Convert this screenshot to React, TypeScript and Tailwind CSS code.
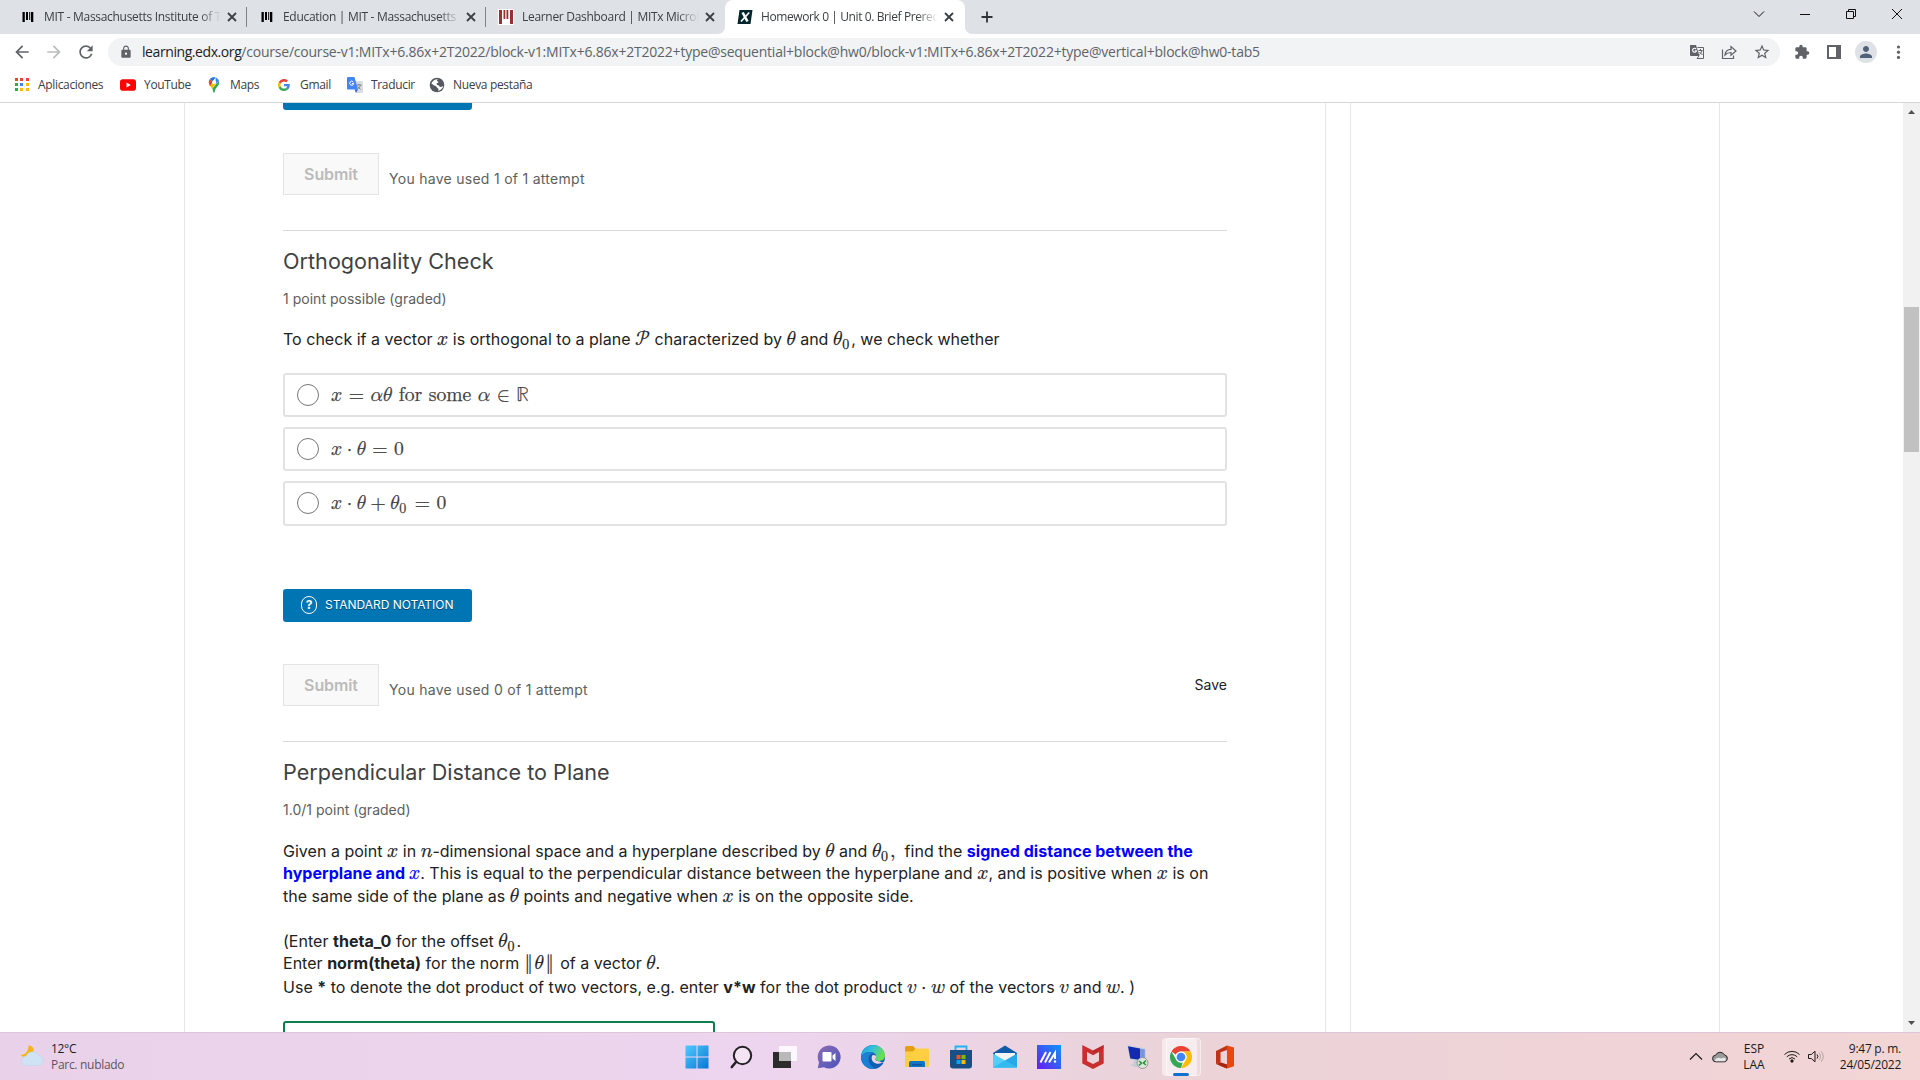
import type { ReactNode } from 'react';
import { MdArrowBack, MdArrowForward, MdExtension, MdLock, MdPerson, MdRefresh, MdStarBorder } from 'react-icons/md';

/* ---------- favicons ---------- */

function MitIcon() {
  return (
    <svg className="h-4 w-4" viewBox="0 0 16 16">
      <path fill="#000" d="M2.500 3h2.300v10H2.500zM6 3h2v8H6zM9.200 3h1v8h-1zM11 3h2.300v10H11z" />
    </svg>
  );
}

function MitxIcon() {
  return (
    <svg className="h-4 w-4" viewBox="0 0 16 16">
      <path fill="#fff" d="M0 0h16v16H0z" />
      <path fill="#973234" d="M1 1h3v14H1zM5.500 1h1.800v9H5.500zM8.500 1h1.800v9H8.500zM12 1h3v14h-3z" />
    </svg>
  );
}

function EdxIcon() {
  return (
    <svg className="h-4 w-4" viewBox="0 0 16 16">
      <path fill="#02262b" d="M2.500 1H15.500L13.500 15H0.500z" />
      <path fill="none" stroke="#fff" strokeWidth="2.600" d="M5.600 3.500l4.900 9" />
      <path fill="none" stroke="#fff" strokeWidth="1.700" d="M12.200 3.500L4 12.500" />
    </svg>
  );
}

function CloseIcon() {
  return (
    <svg className="h-4 w-4 shrink-0" viewBox="0 0 16 16">
      <path fill="none" stroke="#3c4043" strokeWidth="1.800" d="M4 4l8 8M12 4l-8 8" />
    </svg>
  );
}

interface TabData {
  title: string;
  icon: ReactNode;
  active?: boolean;
}

const tabs: TabData[] = [
  { title: 'MIT - Massachusetts Institute of Technology', icon: <MitIcon /> },
  { title: 'Education | MIT - Massachusetts Institute', icon: <MitIcon /> },
  { title: 'Learner Dashboard | MITx MicroMasters', icon: <MitxIcon /> },
  { title: 'Homework 0 | Unit 0. Brief Prerequisites', icon: <EdxIcon />, active: true },
];

function Tab({ title, icon, active }: TabData) {
  return (
    <div
      className={
        active
          ? 'flex h-[34px] w-[240px] items-center rounded-t-lg bg-white pl-3'
          : 'flex h-[34px] w-[239px] items-center pl-3'
      }
    >
      {icon}
      <div
        className={`ml-2 w-[177px] overflow-hidden whitespace-nowrap text-xs text-[#3c4043] [mask-image:linear-gradient(to_right,black_88%,transparent)] ${
          active ? 'tracking-[-0.4px]' : 'tracking-[-0.3px]'
        }`}
      >
        {title}
      </div>
      <div className="ml-[3px] flex">
        <CloseIcon />
      </div>
      {active && (
        <>
          <svg className="absolute -left-[7px] bottom-0 h-[7px] w-[7px]" viewBox="0 0 7 7">
            <path fill="#fff" d="M7 0v7H0a7 7 0 0 0 7-7z" />
          </svg>
          <svg className="absolute -right-[7px] bottom-0 h-[7px] w-[7px]" viewBox="0 0 7 7">
            <path fill="#fff" d="M0 0v7h7a7 7 0 0 1-7-7z" />
          </svg>
        </>
      )}
    </div>
  );
}

function TabStrip() {
  return (
    <div className="flex h-[34px] items-start justify-between bg-[#dee1e6] pl-2">
      <div className="flex">
        {tabs.map((tab, i) => (
          <div key={tab.title} className="relative">
            <Tab {...tab} />
            {i < 2 && <div className="absolute right-0 top-[7px] h-5 w-px bg-[#808387]" />}
          </div>
        ))}
        <svg className="ml-[14px] mt-[9px] h-4 w-4" viewBox="0 0 16 16">
          <path stroke="#303336" strokeWidth="1.800" d="M8 2.500v11M2.500 8h11" />
        </svg>
      </div>
      <div className="flex h-7 items-center gap-[30px] pr-[15px]">
        <svg className="h-4 w-4" viewBox="0 0 16 16" fill="none" stroke="#111">
          <path d="M3 5.500l5 5 5-5" />
        </svg>
        <svg className="h-4 w-4" viewBox="0 0 16 16" fill="none" stroke="#111">
          <path d="M3 8.500h10" />
        </svg>
        <svg className="h-4 w-4" viewBox="0 0 16 16" fill="none" stroke="#111">
          <path d="M3.500 5.500h7v7h-7zM5.500 5.500v-2h7v7h-2" />
        </svg>
        <svg className="h-4 w-4" viewBox="0 0 16 16" fill="none" stroke="#111">
          <path d="M3 3l10 10M13 3L3 13" />
        </svg>
      </div>
    </div>
  );
}

function Toolbar() {
  return (
    <div className="flex h-[32px] items-center pt-1 text-[#5f6368]">
      <MdArrowBack className="ml-3 h-5 w-5" />
      <MdArrowForward className="ml-3 h-5 w-5 text-[#babcbe]" />
      <MdRefresh className="ml-3 h-5 w-5" />
      <div className="ml-[12px] flex h-7 w-[1672px] items-center rounded-full bg-[#f1f3f4]">
        <MdLock className="ml-[11px] h-3.5 w-3.5" />
        <div className="ml-[9px] flex-1 whitespace-nowrap text-sm">
          <span className="tracking-[-0.42px] text-[#202124]">learning.edx.org</span>
          <span className="tracking-[-0.22px]">
            /course/course-v1:MITx+6.86x+2T2022/block-v1:MITx+6.86x+2T2022+type@sequential+block@hw0/block-v1:MITx+6.86x+2T2022+type@vertical+block@hw0-tab5
          </span>
        </div>
        <div className="flex items-center gap-4 pr-[9px]">
          <svg className="h-4 w-4" viewBox="0 0 16 16">
            <path fill="#5f6368" d="M1 1h6l3.500 11H2a1 1 0 0 1-1-1z" />
            <path fill="none" stroke="#5f6368" d="M8.500 3.500h6v11H8l2-2.500M9.500 6.500h4M11.500 5v1.500M13 6.500c-.5 2-1.500 3-2.500 4M10.500 8l3 3" />
            <path fill="none" stroke="#fff" strokeWidth="1.100" d="M7.100 5A2 2 0 1 0 7.500 6.800H5.700" />
          </svg>
          <svg className="h-4 w-4" viewBox="0 0 16 16" fill="none" stroke="#5f6368" strokeWidth="1.200">
            <path d="M1.500 5.500v9h11v-3" />
            <path d="M4 11c.3-4 2.700-5.500 6-5.600V2.500L15 7l-5 4.300V8.500C7.500 8.500 5.500 9.200 4 11z" />
          </svg>
          <MdStarBorder className="h-[18px] w-[18px]" />
        </div>
      </div>
      <MdExtension className="ml-[14px] h-4 w-4" />
      <svg className="ml-4 h-4 w-4" viewBox="0 0 16 16">
        <path fill="#5f6368" d="M1 1h14v14H1zM3 3v10h7V3z" fillRule="evenodd" />
      </svg>
      <div className="ml-[13px] flex h-[22px] w-[22px] items-center justify-center rounded-full bg-[#dee1e6]">
        <MdPerson className="h-[18px] w-[18px] text-[#52617a]" />
      </div>
      <svg className="ml-[13px] h-4 w-4" viewBox="0 0 16 16" fill="#5f6368">
        <circle cx="8.500" cy="3" r="1.600" />
        <circle cx="8.500" cy="8.200" r="1.600" />
        <circle cx="8.500" cy="13.400" r="1.600" />
      </svg>
    </div>
  );
}

/* ---------- bookmarks ---------- */

function AppsIcon() {
  const colors = ['#ea4335', '#ea4335', '#ea4335', '#34a853', '#4285f4', '#fbbc04', '#34a853', '#fbbc04', '#fbbc04'];
  return (
    <div className="grid h-4 w-4 grid-cols-3 gap-[2px] p-px">
      {colors.map((c, i) => (
        <div key={i} className="h-[3px] w-[3px]" style={{ background: c }} />
      ))}
    </div>
  );
}

function GoogleIcon() {
  return (
    <svg className="mx-[2px] h-3 w-3" viewBox="0 0 48 48">
      <path fill="#EA4335" d="M24 9.500c3.540 0 6.710 1.220 9.210 3.600l6.850-6.850C35.900 2.380 30.470 0 24 0 14.620 0 6.510 5.380 2.560 13.220l7.980 6.190C12.430 13.720 17.740 9.500 24 9.500z" />
      <path fill="#4285F4" d="M46.980 24.550c0-1.570-.150-3.090-.380-4.550H24v9.020h12.940c-.580 2.960-2.260 5.480-4.780 7.180l7.730 6c4.510-4.180 7.090-10.360 7.090-17.650z" />
      <path fill="#FBBC05" d="M10.530 28.590c-.480-1.450-.760-2.990-.760-4.590s.270-3.140.760-4.590l-7.980-6.190C.920 16.460 0 20.120 0 24s.920 7.540 2.560 10.780l7.970-6.190z" />
      <path fill="#34A853" d="M24 48c6.480 0 11.930-2.130 15.890-5.810l-7.730-6c-2.150 1.450-4.920 2.300-8.160 2.300-6.260 0-11.570-4.220-13.470-9.910l-7.980 6.190C6.510 42.620 14.620 48 24 48z" />
    </svg>
  );
}

const bookmarks = [
  { label: 'Aplicaciones', icon: <AppsIcon />, width: 'w-[106px]' },
  {
    label: 'YouTube',
    width: 'w-[86px]',
    icon: (
      <svg className="h-4 w-4" viewBox="0 0 16 16">
        <rect y="2.300" width="16" height="11.400" rx="2.800" fill="#f00" />
        <path fill="#fff" d="M6.500 5.500v5L10.800 8z" />
      </svg>
    ),
  },
  {
    label: 'Maps',
    width: 'w-[70px]',
    icon: (
      <svg className="h-4 w-4" viewBox="0 0 16 16">
        <path fill="#34a853" d="M13 3.800c1 3.800-1.500 5.400-3 7.500-1 1.500-1 4.500-2 4.500s-1-2.800-1.700-4.200z" />
        <path fill="#fbbc04" d="M3.500 8.300l3-3.300 3.700 1.500-4.300 5C5.200 10.300 4.200 9.500 3.500 8.300z" />
        <path fill="#ea4335" d="M3.900 2.100L7 4.500 4 8.900C2.300 6.500 2.400 4 3.900 2.100z" />
        <path fill="#1a73e8" d="M3.900 2.100C5.400.3 7.700 0 9.500.500L6.700 4.300z" />
        <path fill="#4285f4" d="M9.500.500c1.600.500 3 1.700 3.500 3.300L9.800 7z" />
        <circle cx="8" cy="5.300" r="1.900" fill="#fff" />
      </svg>
    ),
  },
  { label: 'Gmail', icon: <GoogleIcon />, width: 'w-[71px]' },
  {
    label: 'Traducir',
    width: 'w-[82px]',
    icon: (
      <svg className="h-4 w-4" viewBox="0 0 16 16">
        <path fill="#dadce0" d="M6 4h9a1 1 0 0 1 1 1v10a1 1 0 0 1-1 1H9.500z" />
        <path fill="none" stroke="#7a8288" d="M9.500 8h5M12 6.800V8M13.500 8c-.5 2-1.700 3-3 4M10.800 9.500l2.700 3" />
        <path fill="#4285f4" d="M1 0h6.500L11 12.500H1a1 1 0 0 1-1-1V1a1 1 0 0 1 1-1z" />
        <path fill="#3367d6" d="M7.500 12.500H11L9 16z" />
        <path fill="none" stroke="#fff" d="M6.300 5A2 2 0 1 0 6.700 6.500H4.900" />
      </svg>
    ),
  },
  {
    label: 'Nueva pestaña',
    width: 'w-[110px]',
    icon: (
      <svg className="h-4 w-4" viewBox="0 0 16 16">
        <circle cx="8" cy="8" r="7.300" fill="#565a5f" />
        <path fill="#fff" d="M9 2.200c-1.500.8-1.200 2 .2 2.200.6 1-.4 1.600-1.500 1.900l.2 1.700c1.500 0 2.500.5 2.700 1.800l1.600.2c.7-.6 1.500-.8 2-.5-.8 2.200-2.700 4-5 4.400.8-1.600.2-2.700-1.200-3.200-.3-1.500-1.500-2-2.800-2.300L2.400 6.600C3.200 4.200 5.800 2.100 9 2.200z" />
      </svg>
    ),
  },
];

function BookmarksBar() {
  return (
    <div className="flex h-[37px] items-center border-b border-[#d5d7da] pl-3.5 pt-px text-xs tracking-[-0.33px] text-[#3c4043]">
      {bookmarks.map((b) => (
        <div key={b.label} className={`flex items-center gap-2 whitespace-nowrap ${b.width}`}>
          {b.icon}
          <span>{b.label}</span>
        </div>
      ))}
    </div>
  );
}

/* ---------- course content ---------- */

function M({ children }: { children: ReactNode }) {
  return (
    <span className="font-['Latin_Modern_Math','STIX_Two_Math','Liberation_Serif',serif] text-[19.6px] font-normal leading-[0] tracking-normal [-webkit-text-stroke:0.25px_currentColor]">
      {children}
    </span>
  );
}

function Sub() {
  return <span className="relative top-[4px] mr-[2px] text-[14px]">0</span>;
}

// binary operators sit closer to their operands than relations do
function Bin({ children }: { children: ReactNode }) {
  return <span className="mx-[4.5px]">{children}</span>;
}

function Line({ children }: { children: ReactNode }) {
  return <div className="h-[22.5px] whitespace-pre leading-[22.5px]">{children}</div>;
}

function SubmitRow({ used, save }: { used: number; save?: boolean }) {
  return (
    <div className="flex h-[42px]">
      <button
        type="button"
        className="h-[42px] w-24 border border-[#e4e4e4] bg-[#f9f9f9] text-base font-semibold tracking-[-0.1px] text-[#bbb]"
      >
        Submit
      </button>
      <div className="ml-[10px] mt-[16px] h-5 flex-1 text-sm leading-5 tracking-[0.28px] text-[#5e5e5e]">
        You have used {used} of 1 attempt
      </div>
      {save && <div className="mt-[11px] h-5 text-sm leading-5 text-[#222]">Save</div>}
    </div>
  );
}

function Heading({ title, points }: { title: string; points: string }) {
  return (
    <div className="border-t border-[#d9d9d9] pt-[14px]">
      <h3 className="h-8 text-[21.6px] leading-8 text-[#414141]">{title}</h3>
      <div className="mt-3 h-5 text-sm leading-5 text-[#5e5e5e]">{points}</div>
    </div>
  );
}

function Choice({ children }: { children: ReactNode }) {
  return (
    <div className="flex h-[44px] items-center rounded-[3px] border-2 border-[#e2e2e2] pl-3 text-[#414141] last:h-[45px]">
      <div className="h-[22px] w-[22px] rounded-full border border-[#767676]" />
      <div className="ml-3 whitespace-pre">
        <M>{children}</M>
      </div>
    </div>
  );
}

function Course() {
  return (
    <div className="w-[944px] font-['Inter',sans-serif] text-base tracking-[0.02px] text-[#222]">
      <div className="h-[7px] w-[189px] rounded-b-[3px] bg-[#0075b4]" />
      <div className="mt-[43px]">
        <SubmitRow used={1} />
      </div>

      <div className="mt-[35px]">
        <Heading title="Orthogonality Check" points="1 point possible (graded)" />
      </div>
      <div className="mt-[19px]">
        <Line>
          To check if a vector <M>𝑥</M> is orthogonal to a plane <M>𝒫</M> characterized by <M>𝜃</M> and <M>𝜃<Sub /></M>, we check whether
        </Line>
      </div>
      <div className="mt-[22px] flex flex-col gap-2.5">
        <Choice>𝑥 = 𝛼𝜃 for some 𝛼 ∈ ℝ</Choice>
        <Choice>𝑥<Bin>⋅</Bin>𝜃 = 0</Choice>
        <Choice>𝑥<Bin>⋅</Bin>𝜃<Bin>+</Bin>𝜃<Sub /> = 0</Choice>
      </div>
      <div className="mt-[63px] flex h-[33px] w-[189px] items-center rounded-[3px] bg-[#0075b4] pl-[18px] text-white">
        <div className="flex h-[18px] w-4 items-center justify-center rounded-full border border-white text-xs font-bold">?</div>
        <span className="ml-2 whitespace-nowrap text-xs tracking-[-0.04px] [text-shadow:0_1px_0_#00466c]">STANDARD NOTATION</span>
      </div>
      <div className="mt-[42px]">
        <SubmitRow used={0} save />
      </div>

      <div className="mt-[35px]">
        <Heading title="Perpendicular Distance to Plane" points="1.0/1 point (graded)" />
      </div>
      <div className="mt-5">
        <Line>
          Given a point <M>𝑥</M> in <M>𝑛</M>-dimensional space and a hyperplane described by <M>𝜃</M> and <M>𝜃<Sub />,</M>{'  '}find the <b className="text-[#00f]">signed distance between the</b>
        </Line>
        <Line>
          <b className="text-[#00f]">hyperplane and <M>𝑥</M></b>. This is equal to the perpendicular distance between the hyperplane and <M>𝑥</M>, and is positive when <M>𝑥</M> is on
        </Line>
        <Line>
          the same side of the plane as <M>𝜃</M> points and negative when <M>𝑥</M> is on the opposite side.
        </Line>
      </div>
      <div className="mt-[22.5px]">
        <Line>
          (Enter <b>theta_0</b> for the offset <M>𝜃<Sub /></M>.
        </Line>
        <Line>
          Enter <b>norm(theta)</b> for the norm{' '}
          <span className="ml-px mr-[2px]">
            <M>‖<span className="mx-[2px]">𝜃</span>‖</M>
          </span>{' '}
          of a vector <M>𝜃</M>.
        </Line>
        <div className="h-[1.5px]" />
        <Line>
          Use <b>*</b> to denote the dot product of two vectors, e.g. enter <b>v*w</b> for the dot product <M>𝑣<Bin>⋅</Bin>𝑤</M> of the vectors <M>𝑣</M> and <M>𝑤</M>. )
        </Line>
      </div>
      <div className="mt-[22px] h-12 w-[432px] rounded-[3px] border-2 border-[#0d7d4d]" />
    </div>
  );
}

function Scrollbar() {
  return (
    <div className="flex h-full w-[17px] flex-col bg-[#f1f1f1]">
      <svg className="h-[17px] w-[17px]" viewBox="0 0 17 17">
        <path fill="#505050" d="M5 11h7L8.500 7z" />
      </svg>
      <div className="mx-px mt-[187px] h-[145px] bg-[#c1c1c1]" />
      <div className="flex-1" />
      <svg className="h-[17px] w-[17px]" viewBox="0 0 17 17">
        <path fill="#505050" d="M5 6h7l-3.500 4z" />
      </svg>
    </div>
  );
}

/* ---------- taskbar ---------- */

function TaskIcon({ children }: { children: ReactNode }) {
  return (
    <div className="flex w-11 justify-center">
      <svg className="h-6 w-6" viewBox="0 0 24 24">
        {children}
      </svg>
    </div>
  );
}

function TaskbarApps() {
  return (
    <div className="flex h-full w-[572px] items-center">
      <TaskIcon>
        <linearGradient id="win" x1="0" y1="0" x2="1" y2="1">
          <stop offset="0" stopColor="#4fcaff" />
          <stop offset="1" stopColor="#0a76d4" />
        </linearGradient>
        <path fill="url(#win)" d="M.500.500h11v11H.500zM12.500.500h11v11h-11zM.500 12.500h11v11H.500zM12.500 12.500h11v11h-11z" />
      </TaskIcon>
      <TaskIcon>
        <circle cx="13.500" cy="10.500" r="8.700" fill="#f3e3f3" stroke="#222" strokeWidth="2" />
        <path stroke="#222" strokeWidth="2.600" strokeLinecap="round" d="M7 17l-4.200 5" />
      </TaskIcon>
      <TaskIcon>
        <path fill="#2c2c2c" d="M0 7h18v16H0z" />
        <path fill="#fff" fillOpacity=".8" d="M6 1h18v15H6z" />
        <path fill="#b9b9b9" d="M6 7h12v9H6z" />
      </TaskIcon>
      <TaskIcon>
        <linearGradient id="chat" x1="0" y1="0" x2="1" y2="1">
          <stop offset="0" stopColor="#8a6db4" />
          <stop offset="1" stopColor="#4b53bc" />
        </linearGradient>
        <path fill="url(#chat)" d="M12 .500a11.500 11.500 0 1 1-5 21.800L.800 23.300l1.200-6A11.500 11.500 0 0 1 12 .500z" />
        <rect x="5.500" y="7" width="9" height="9.500" rx="1" fill="#fff" />
        <path fill="#fff" d="M15.500 10.500L18.500 8v8l-3-2.500z" />
      </TaskIcon>
      <TaskIcon>
        <linearGradient id="edgeTop" x1="0" y1="0" x2="1" y2=".4">
          <stop offset="0" stopColor="#1a9de0" />
          <stop offset=".5" stopColor="#35c1d8" />
          <stop offset="1" stopColor="#6be04e" />
        </linearGradient>
        <circle cx="12" cy="12" r="12" fill="#0f5fb5" />
        <path fill="url(#edgeTop)" d="M0 11.500C.500 5 5.500 0 12 0c7 0 12 5 12 10.300 0 3.700-2.700 5.700-5.800 5.700-2.500 0-4-.900-4-1.800 0-.7.900-1 .9-2.700C15.100 9 12.500 7 9 7c-4 0-7.500 2-9 4.500z" />
        <path fill="#1b7fd3" d="M0 11.500C1.500 9 4.500 7 8.500 7c2 0 3.600.600 4.800 1.500C9 8 7.500 11 7.500 14c0 4.500 3 8 7.500 9.600A12 12 0 0 1 0 11.500z" />
        <path fill="#eed2e6" d="M11 11c-1.500 4 2 8.500 8 7.500 1.500-.3 2.700-.900 3.500-1.700l2 .4c-1 1.300-3.500.300-5.700-.700-1.600-.3-4.700-.500-4.600-2.300 0-1 1-1.200.9-3C15 10.500 12 9 11 11z" />
      </TaskIcon>
      <TaskIcon>
        <path fill="#e2a10c" d="M0 2.500A1.500 1.500 0 0 1 1.500 1H8l2.500 2.500V7H0z" />
        <path fill="#ffcf42" d="M0 6.500h8l2.500-3H22A1.500 1.500 0 0 1 24 5v16a1 1 0 0 1-1 1H1a1 1 0 0 1-1-1z" />
        <path fill="#1074c4" d="M4 22v-4.500A1.500 1.500 0 0 1 5.500 16h13a1.500 1.500 0 0 1 1.500 1.500V22z" />
        <path fill="#0a549b" d="M7 19h10v1.500H7z" />
      </TaskIcon>
      <TaskIcon>
        <path fill="none" stroke="#1fb4ef" strokeWidth="1.800" d="M6.500 6V1.500h11V6" />
        <path fill="#194f85" d="M1 5h22v15.500a3 3 0 0 1-3 3H4a3 3 0 0 1-3-3z" />
        <path fill="#f25022" d="M7.500 10h4v4h-4z" />
        <path fill="#7fba00" d="M12.500 10h4v4h-4z" />
        <path fill="#00a4ef" d="M7.500 15h4v4h-4z" />
        <path fill="#ffb900" d="M12.500 15h4v4h-4z" />
      </TaskIcon>
      <TaskIcon>
        <path fill="#0f5ba8" d="M0 8L12 .500 24 8v5H0z" />
        <path fill="#f4f4f4" d="M2 8h20v8H2z" />
        <path fill="#28a8e8" d="M24 8.500v14H0z" />
        <path fill="#50d0f8" d="M0 8.500l24 14H0z" />
        <path fill="#35b9ee" d="M12 15.500l12 7H0z" />
      </TaskIcon>
      <TaskIcon>
        <linearGradient id="asus" x1="1" y1="0" x2="0" y2="1">
          <stop offset="0" stopColor="#0a96f5" />
          <stop offset="1" stopColor="#6a1bf2" />
        </linearGradient>
        <path fill="url(#asus)" d="M0 0h24v24H0z" />
        <path stroke="#fff" strokeWidth="2" fill="none" d="M3.500 17.500L9 7M8 17.500L13.500 7M12 17.500L18 8v6" />
        <circle cx="18" cy="16.500" r="1.200" fill="#fff" />
      </TaskIcon>
      <TaskIcon>
        <path fill="#c8302f" d="M1.300 0L12 5.500 22.700 0v18.500L12 24 1.300 18.500z" />
        <path fill="#edd2da" d="M6 7l6 3.200L18 7v9L12 19l-6-3z" />
        <path fill="#a32425" d="M12 5.500L22.700 0v3L12 8.500z" opacity=".5" />
      </TaskIcon>
      <TaskIcon>
        <path fill="#c9d2da" d="M2 0l19 3.500v14L5 15z" />
        <path fill="#1529b0" d="M3 1.300l12 2.200.3 11.600L5.300 13.500z" />
        <path fill="#7d92dd" d="M15 3.500l4.800 1v11.200l-4.500-.600z" />
        <path fill="#c5ccd2" d="M8 15.500l5 .5 1 3.500 3 1.500-7 1-5-2 4-1.500z" />
        <circle cx="17.500" cy="18" r="5.500" fill="#dfe3e0" stroke="#878d88" strokeWidth=".8" />
        <path fill="none" stroke="#27973a" strokeWidth="1.600" d="M14 16l2.500 2-2.500 2.500M21 15.500L18.500 18l2.500 2" />
      </TaskIcon>
      <div className="relative flex h-[38px] w-11 items-center justify-center">
        <div className="absolute left-[7px] top-0 h-[38px] w-[35px] rounded border border-white/50 bg-white/20" />
        <div className="absolute left-[3px] top-0 h-[38px] w-[35px] rounded bg-white/50" />
        <svg className="relative h-[22px] w-[22px]" viewBox="0 0 48 48">
          <circle cx="24" cy="24" r="24" fill="#fff" />
          <path fill="#ea4335" d="M24 0a24 24 0 0 1 20.800 12H24a12 12 0 0 0-11 7L3.200 12A24 24 0 0 1 24 0z" />
          <path fill="#34a853" d="M3.200 12L13.600 30A12 12 0 0 0 28 35.300L24 48A24 24 0 0 1 3.200 12z" />
          <path fill="#fbbc04" d="M44.800 12A24 24 0 0 1 24 48l10.400-18A12 12 0 0 0 31 14.300L30 12z" />
          <circle cx="24" cy="24" r="12" fill="#fff" />
          <circle cx="24" cy="24" r="9.500" fill="#4285f4" />
        </svg>
        <div className="absolute bottom-0 left-[14px] h-[3px] w-4 rounded-full bg-[#0f72d0]" />
      </div>
      <TaskIcon>
        <path fill="#c03316" d="M3 6l11-5.500v4.500L7.500 7.300v10L3 19z" />
        <path fill="#e8480f" d="M14 .500L21 2.500v18.800L14 23.500 6 20.500l8-1z" />
        <path fill="#a9240d" d="M3 19l4.500-1.700 6.500 2.200v4z" />
      </TaskIcon>
    </div>
  );
}

function Taskbar() {
  return (
    <div className="flex h-12 items-center border-t border-[#dcc6da] bg-[linear-gradient(to_right,#e9d2e9_0%,#edd5ef_40%,#ebd3d8_62%,#f0d3d6_88%,#f2d5d4_100%)] text-xs text-[#1b1b1b]">
      <div className="flex w-[675px] items-center pl-[20px]">
        <svg className="h-6 w-6" viewBox="0 0 24 24">
          <path fill="#f7b416" d="M8.500.500c5 0 6.500 5 4 9-2.500 3.500-9 4-12 .5C5.500 10 8.500 6 8.500.500z" />
          <path fill="#cfe3f4" stroke="#b9d3ea" strokeWidth=".5" d="M6.500 20.500a4.700 4.700 0 0 1-.3-9.400 6.800 6.800 0 0 1 12.400-.800 5.200 5.200 0 0 1 .400 10.200z" />
        </svg>
        <div className="ml-[7px] mt-px whitespace-nowrap leading-4 tracking-[-0.3px]">
          <div>12°C</div>
          <div className="text-[#5f545e]">Parc. nublado</div>
        </div>
      </div>
      <TaskbarApps />
      <div className="flex flex-1 items-center justify-end pr-[19px]">
        <svg className="h-4 w-4" viewBox="0 0 16 16" fill="none" stroke="#1b1b1b" strokeWidth="1.200">
          <path d="M2 10.500l6-6 6 6" />
        </svg>
        <svg className="ml-2 h-4 w-4" viewBox="0 0 16 16">
          <path fill="#9a9a9a" stroke="#222" d="M4 12.800a3.300 3.300 0 0 1-.3-6.600 4.800 4.800 0 0 1 8.700-.300 3.500 3.500 0 0 1 .100 6.900z" />
          <path fill="#e8e8e8" d="M2.500 11.500C4.500 8 8 8.500 9 9.500c1.500-1.200 4-.800 5 .500-.2 1.400-1 2.200-2 2.200H4c-.7 0-1.200-.3-1.500-.7z" />
        </svg>
        <div className="ml-[14px] w-[24px] text-center leading-4">
          <div>ESP</div>
          <div>LAA</div>
        </div>
        <svg className="ml-[18px] h-4 w-4" viewBox="0 0 16 16" fill="none" stroke="#1b1b1b">
          <path d="M.500 5.500a10.500 10.500 0 0 1 15 0M2.800 7.800a7.400 7.400 0 0 1 10.400 0M5 10a4.300 4.300 0 0 1 6 0" />
          <circle cx="8" cy="12" r="1.200" fill="#1b1b1b" />
        </svg>
        <svg className="ml-2 h-4 w-4" viewBox="0 0 16 16" fill="none" stroke="#1b1b1b">
          <path d="M.500 5.500v4h2.800L7 12.800V2.200L3.300 5.500zM9 5.500a3 3 0 0 1 0 4" />
          <path stroke="#b3a0a2" d="M11 3.800a5.500 5.500 0 0 1 0 7.400M13.200 2.200a8 8 0 0 1 0 10.600" />
        </svg>
        <div className="ml-[13px] w-[64px] whitespace-nowrap text-right leading-4 tracking-[-0.25px]">
          <div>9:47 p. m.</div>
          <div>24/05/2022</div>
        </div>
      </div>
    </div>
  );
}

export default function App() {
  return (
    <div className="flex h-[1080px] w-[1920px] flex-col overflow-hidden bg-white font-['Open_Sans',sans-serif]">
      <TabStrip />
      <Toolbar />
      <BookmarksBar />
      <div className="flex h-[929px] overflow-hidden">
        <div className="w-[184px] shrink-0" />
        <div className="h-full w-[1142px] shrink-0 border-x border-[#e7e7e7] pl-[98px]">
          <Course />
        </div>
        <div className="ml-6 h-full w-[370px] shrink-0 border-x border-[#e7e7e7]" />
        <div className="flex-1" />
        <Scrollbar />
      </div>
      <Taskbar />
    </div>
  );
}
